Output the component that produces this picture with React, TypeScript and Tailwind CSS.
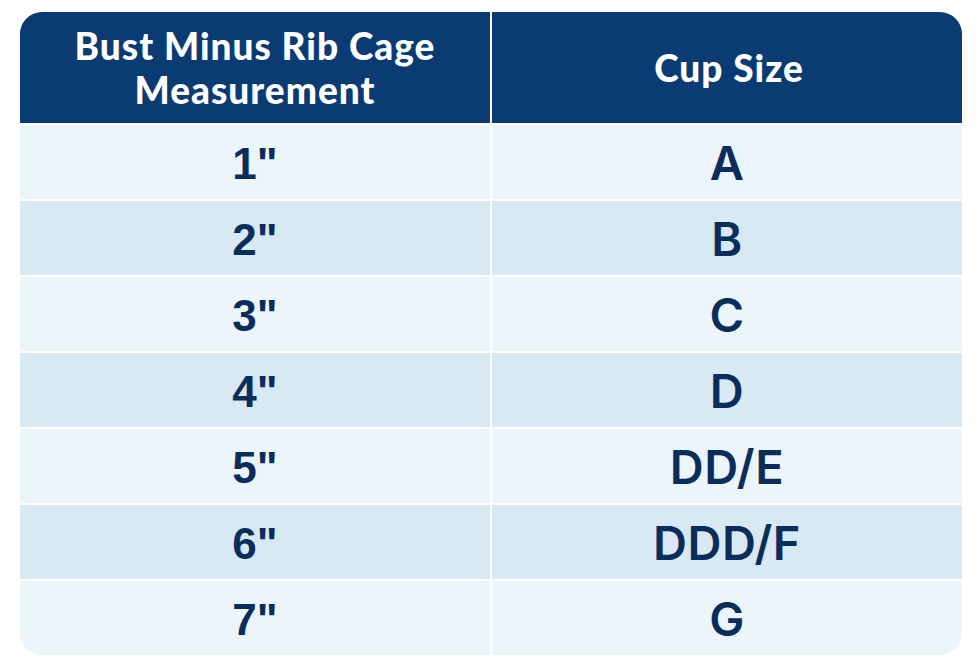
import React from "react";

const rows: [string, string][] = [
  ["1\"", "A"],
  ["2\"", "B"],
  ["3\"", "C"],
  ["4\"", "D"],
  ["5\"", "DD/E"],
  ["6\"", "DDD/F"],
  ["7\"", "G"],
];

export default function App() {
  return (
    <div className="w-[980px] h-[667px] bg-white pt-[12px] pl-[20px]">
      <div className="w-[942px] rounded-[22px] overflow-hidden grid grid-cols-2 gap-[2px] bg-white">
        <div className="h-[111px] bg-[#0a3b72] flex items-center justify-center text-center text-white font-black text-[37px] leading-[44px] pt-[1px] [font-family:Lato,'Noto_Sans',sans-serif] tracking-[1px]">
          <div>
            Bust Minus Rib Cage
            <br />
            Measurement
          </div>
        </div>
        <div className="h-[111px] bg-[#0a3b72] flex items-center justify-center text-white font-black text-[37px] [font-family:Lato,'Noto_Sans',sans-serif] tracking-[1px] pl-[4px]">
          Cup Size
        </div>
        {rows.map(([m, c], i) => {
          const bg = i % 2 === 0 ? "bg-[#ecf5f9]" : "bg-[#d9e9f3]";
          return (
            <React.Fragment key={i}>
              <div
                className={`h-[74px] ${bg} flex items-center justify-center text-[#0b2d5c] font-bold text-[44px] [font-family:'Liberation_Sans',Arial,sans-serif] pt-[3px]`}
              >
                {m}
              </div>
              <div
                className={`h-[74px] ${bg} flex items-center justify-center text-[#0b2d5c] font-semibold text-[47px] [font-family:Inter,'Noto_Sans',sans-serif] pt-[2px] tracking-[0.5px]`}
              >
                {c}
              </div>
            </React.Fragment>
          );
        })}
      </div>
    </div>
  );
}
